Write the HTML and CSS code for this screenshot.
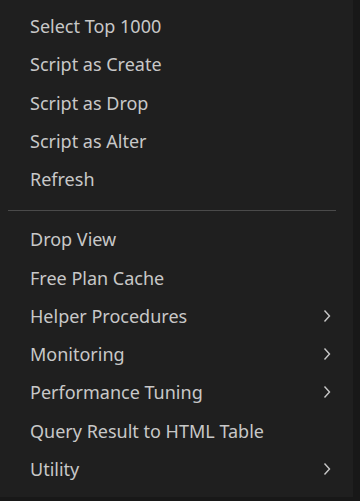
FILE: index.html
```html
<!DOCTYPE html>
<html>
<head>
<meta charset="utf-8">
<link rel="stylesheet" href="styles.css">
</head>
<body>
<div class="menu">
  <div class="group">
    <div class="item"><span class="label">Select Top 1000</span></div>
    <div class="item"><span class="label">Script as Create</span></div>
    <div class="item"><span class="label">Script as Drop</span></div>
    <div class="item"><span class="label">Script as Alter</span></div>
    <div class="item"><span class="label">Refresh</span></div>
  </div>
  <div class="separator"></div>
  <div class="group">
    <div class="item"><span class="label">Drop View</span></div>
    <div class="item"><span class="label">Free Plan Cache</span></div>
    <div class="item"><span class="label">Helper Procedures</span><svg class="chev" viewBox="0 0 8 14" width="8" height="14"><path d="M1.5 1.5 L6.5 7 L1.5 12.5" fill="none" stroke="#c8c8c8" stroke-width="1.4"/></svg></div>
    <div class="item"><span class="label">Monitoring</span><svg class="chev" viewBox="0 0 8 14" width="8" height="14"><path d="M1.5 1.5 L6.5 7 L1.5 12.5" fill="none" stroke="#c8c8c8" stroke-width="1.4"/></svg></div>
    <div class="item"><span class="label">Performance Tuning</span><svg class="chev" viewBox="0 0 8 14" width="8" height="14"><path d="M1.5 1.5 L6.5 7 L1.5 12.5" fill="none" stroke="#c8c8c8" stroke-width="1.4"/></svg></div>
    <div class="item"><span class="label">Query Result to HTML Table</span></div>
    <div class="item"><span class="label">Utility</span><svg class="chev" viewBox="0 0 8 14" width="8" height="14"><path d="M1.5 1.5 L6.5 7 L1.5 12.5" fill="none" stroke="#c8c8c8" stroke-width="1.4"/></svg></div>
  </div>
</div>
</body>
</html>
```

FILE: styles.css
```css
html, body {
  margin: 0;
  padding: 0;
  background: #181818;
  width: 360px;
  height: 501px;
  overflow: hidden;
}
.menu {
  width: 353px;
  height: 497px;
  box-sizing: border-box;
  background: #1f1f1f;
  padding-top: 7px;
  font-family: "Noto Sans", "Open Sans", sans-serif;
  font-size: 18px;
  color: #c8c8c8;
}
.item {
  height: 38.25px;
  display: flex;
  align-items: center;
  justify-content: space-between;
  padding-left: 30px;
  padding-right: 22px;
}
.label {
  white-space: nowrap;
}
.separator {
  height: 1px;
  background: #4a4a4a;
  margin: 12px 17px 9px 8px;
}
.chev {
  display: block;
}
```
